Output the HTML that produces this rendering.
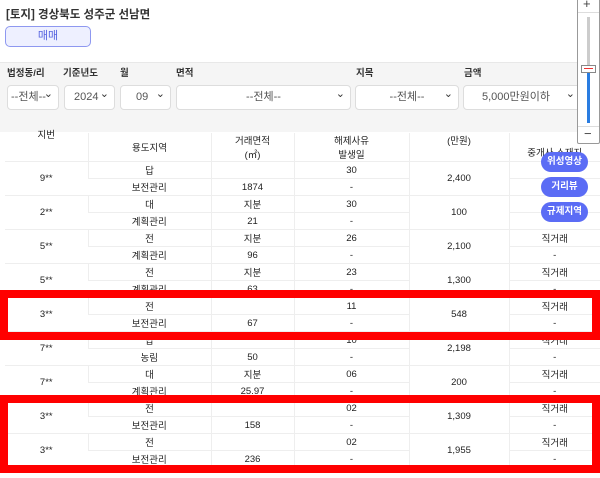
<!DOCTYPE html>
<html><head><meta charset="utf-8"><style>
*{margin:0;padding:0;box-sizing:border-box}
body{width:600px;height:478px;overflow:hidden;background:#fff;font-family:"Liberation Sans","Noto Sans CJK KR",sans-serif;color:#222;position:relative}
.a{position:absolute}
.t{left:6px;top:6px;font-size:11.5px;font-weight:bold;color:#333}
.btn{left:5px;top:26px;width:86px;height:21px;border:1px solid #8e98f0;border-radius:5px;background:#eef0ff;color:#5563e0;font-size:11px;text-align:center;line-height:19px}
.band{left:0;top:62px;width:600px;height:70px;background:#f5f5f5;border-top:1px solid #e8e8e8}
.lb{top:68px;font-size:9.5px;line-height:12px;font-weight:bold;color:#333}
.sel{top:85px;height:25px;background:#fff;border:1px solid #ddd;border-radius:4px;font-size:11px;color:#555;line-height:23px;text-align:center}
.sel:after{content:"⌄";position:absolute;right:5px;top:-3px;font-size:11px;color:#333}
table{position:absolute;left:5px;top:133px;border-collapse:collapse;font-size:9.5px;table-layout:fixed}
td{text-align:center;border-left:1px solid #eee;border-bottom:1px solid #eee;height:17px;padding:0;color:#222}
td:first-child{border-left:none}
.hd td{height:28px;vertical-align:middle}
.bt{width:47px;height:20px;border-radius:10px;background:#5b6cf5;color:#fff;font-size:9.5px;font-weight:bold;text-align:center;line-height:20px;left:541px}
.red{border:8px solid #f00;left:0;width:600px}
</style></head><body>
<div class="a t">[토지] 경상북도 성주군 선남면</div>
<div class="a btn">매매</div>
<div class="a band"></div>
<div class="a lb" style="left:7px">법정동/리</div>
<div class="a lb" style="left:63px">기준년도</div>
<div class="a lb" style="left:120px">월</div>
<div class="a lb" style="left:176px">면적</div>
<div class="a lb" style="left:356px">지목</div>
<div class="a lb" style="left:464px">금액</div>
<div class="a sel" style="left:7px;width:52px;text-align:left;padding-left:3px">--전체--</div>
<div class="a sel" style="left:64px;width:51px;text-align:left;padding-left:9px">2024</div>
<div class="a sel" style="left:120px;width:51px;text-align:left;padding-left:15px">09</div>
<div class="a sel" style="left:176px;width:175px">--전체--</div>
<div class="a sel" style="left:355px;width:104px">--전체--</div>
<div class="a sel" style="left:463px;width:118px;text-align:left;padding-left:18px">5,000만원이하</div>
<table>
<colgroup><col style="width:83px"><col style="width:123px"><col style="width:83px"><col style="width:115px"><col style="width:100px"><col style="width:91px"></colgroup>
<tr class="hd"><td style="vertical-align:top;line-height:6px">지번</td><td>용도지역</td><td>거래면적<br>(㎡)</td><td>해제사유<br>발생일</td><td style="vertical-align:top">(만원)</td><td style="padding-top:10px">중개사 소재지</td></tr>
<tr><td rowspan="2">9**</td><td>답</td><td></td><td>30</td><td rowspan="2">2,400</td><td></td></tr>
<tr><td>보전관리</td><td>1874</td><td>-</td><td></td></tr>
<tr><td rowspan="2">2**</td><td>대</td><td>지분</td><td>30</td><td rowspan="2">100</td><td></td></tr>
<tr><td>계획관리</td><td>21</td><td>-</td><td></td></tr>
<tr><td rowspan="2">5**</td><td>전</td><td>지분</td><td>26</td><td rowspan="2">2,100</td><td>직거래</td></tr>
<tr><td>계획관리</td><td>96</td><td>-</td><td>-</td></tr>
<tr><td rowspan="2">5**</td><td>전</td><td>지분</td><td>23</td><td rowspan="2">1,300</td><td>직거래</td></tr>
<tr><td>계획관리</td><td>63</td><td>-</td><td>-</td></tr>
<tr><td rowspan="2">3**</td><td>전</td><td></td><td>11</td><td rowspan="2">548</td><td>직거래</td></tr>
<tr><td>보전관리</td><td>67</td><td>-</td><td>-</td></tr>
<tr><td rowspan="2">7**</td><td>답</td><td></td><td>10</td><td rowspan="2">2,198</td><td>직거래</td></tr>
<tr><td>농림</td><td>50</td><td>-</td><td>-</td></tr>
<tr><td rowspan="2">7**</td><td>대</td><td>지분</td><td>06</td><td rowspan="2">200</td><td>직거래</td></tr>
<tr><td>계획관리</td><td>25.97</td><td>-</td><td>-</td></tr>
<tr><td rowspan="2">3**</td><td>전</td><td></td><td>02</td><td rowspan="2">1,309</td><td>직거래</td></tr>
<tr><td>보전관리</td><td>158</td><td>-</td><td>-</td></tr>
<tr><td rowspan="2">3**</td><td>전</td><td></td><td>02</td><td rowspan="2">1,955</td><td>직거래</td></tr>
<tr><td>보전관리</td><td>236</td><td>-</td><td>-</td></tr>
</table>
<div class="a bt" style="top:152px">위성영상</div>
<div class="a bt" style="top:177px">거리뷰</div>
<div class="a bt" style="top:202px">규제지역</div>
<div class="a red" style="top:290px;height:50px"></div>
<div class="a red" style="top:395px;height:78px"></div>
<div class="a" style="left:577px;top:-2px;width:23px;height:146px;background:#fff;border:1px solid #999;border-radius:2px">
<div class="a" style="left:5px;top:-3px;font-size:13px;color:#444">+</div>
<div class="a" style="left:0;top:13px;width:21px;border-top:1px solid #ddd"></div>
<div class="a" style="left:9px;top:18px;width:3px;height:52px;background:#ccc"></div>
<div class="a" style="left:9px;top:70px;width:3px;height:54px;background:#2a7de1"></div>
<div class="a" style="left:3px;top:66px;width:15px;height:8px;background:#fff;border:1px solid #888"><div class="a" style="left:2px;top:2px;width:9px;height:1px;background:#e33"></div></div>
<div class="a" style="left:0;top:127px;width:21px;border-top:1px solid #ddd"></div>
<div class="a" style="left:6px;top:127px;font-size:13px;color:#444">−</div>
</div>
</body></html>
